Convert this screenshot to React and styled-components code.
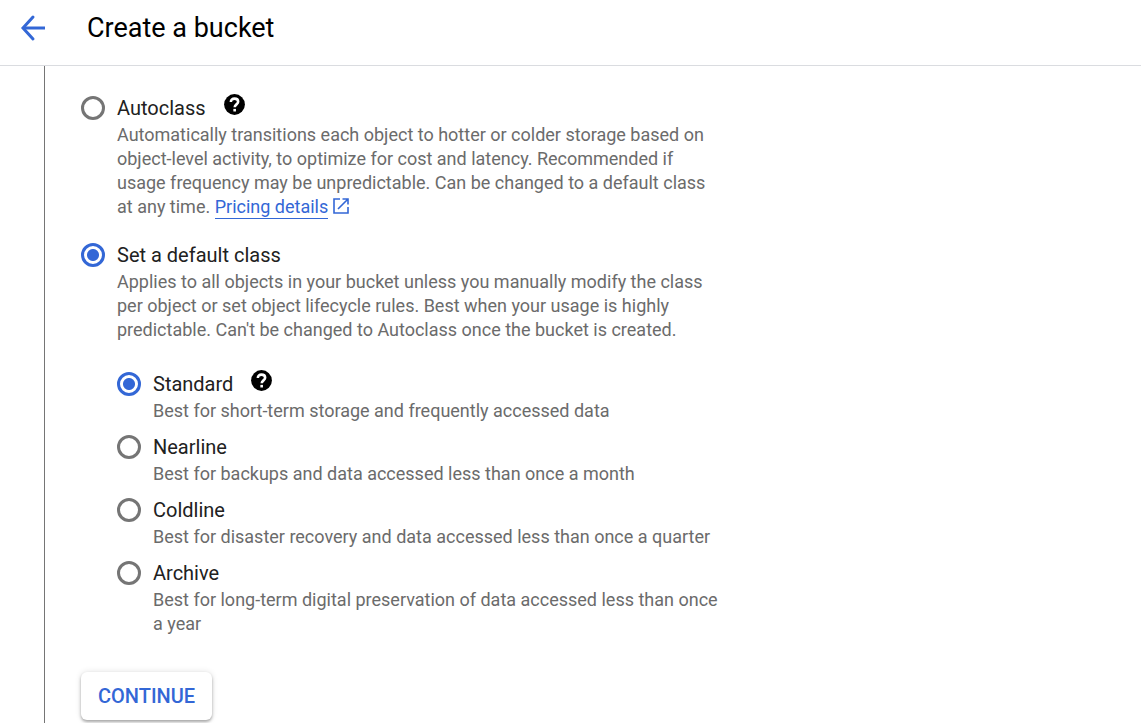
import React, { useState } from "react";
import styled, { createGlobalStyle } from "styled-components";

const GlobalStyle = createGlobalStyle`
  *, *::before, *::after { box-sizing: border-box; }
  body {
    margin: 0;
    background: #fff;
    color: #000;
    font-family: Roboto, "Liberation Sans", sans-serif;
  }
`;

const Page = styled.div`
  min-height: 100vh;
  display: flex;
  flex-direction: column;
`;

const Header = styled.header`
  display: flex;
  align-items: center;
  gap: 36px;
  height: 66px;
  padding: 0 15px 10px;
  border-bottom: 1px solid #dadce0;
`;

const BackButton = styled.button`
  display: flex;
  padding: 0;
  border: 0;
  background: none;
  color: #3367d6;
  cursor: pointer;
`;

const Title = styled.h1`
  margin: 0;
  font-size: 27px;
  font-weight: 400;
  line-height: 36px;
`;

const Step = styled.main`
  flex: 1;
  margin-left: 44px;
  padding: 30px 36px 3px;
  border-left: 1px solid #757575;
`;

const Form = styled.form`
  display: flex;
  flex-direction: column;
  align-items: flex-start;
  gap: 36px;
  max-width: 640px;
`;

const OptionList = styled.div`
  display: flex;
  flex-direction: column;
  gap: ${(p) => (p.$nested ? "12px" : "24px")};
  margin-top: ${(p) => (p.$nested ? "30px" : "0")};
`;

const OptionRow = styled.div`
  display: grid;
  grid-template-columns: 24px 1fr;
  column-gap: 12px;
`;

const Radio = styled.input`
  appearance: none;
  width: 24px;
  height: 24px;
  margin: 0;
  border: 3px solid #757575;
  border-radius: 50%;
  cursor: pointer;

  &:checked {
    border-color: #3367d6;
    background: radial-gradient(circle, #3367d6 0 5.5px, transparent 6.5px);
  }
`;

const LabelLine = styled.div`
  display: flex;
  align-items: flex-start;
  gap: 16px;
  height: 24px;
`;

const Label = styled.label`
  font-size: 20px;
  line-height: 24px;
  color: #212121;
`;

const HelpButton = styled.button`
  display: flex;
  margin-top: -4px;
  padding: 0;
  border: 0;
  background: none;
  color: #000;
  cursor: pointer;
`;

const Description = styled.p`
  margin: 3px 0 0;
  font-size: 18px;
  line-height: 24px;
  color: #6b6b6b;
`;

const Link = styled.a`
  padding-bottom: 1px;
  border-bottom: 1px solid #3367d6;
  color: #3367d6;
  text-decoration: none;
`;

const ExternalMark = styled.svg`
  margin-left: 5px;
  color: #3367d6;
  vertical-align: -1px;
`;

const ContinueButton = styled.button`
  height: 48px;
  padding: 0 17px;
  border: 0;
  border-radius: 6px;
  background: #fff;
  box-shadow: 0 2px 3px rgba(0, 0, 0, 0.3), 0 0 6px rgba(0, 0, 0, 0.12);
  color: #3367d6;
  font: 500 20px/24px Roboto, "Liberation Sans", sans-serif;
  text-transform: uppercase;
  cursor: pointer;
`;

const BackIcon = () => (
  <svg width="36" height="36" viewBox="0 0 36 36" fill="none" stroke="currentColor" strokeWidth="3" aria-hidden="true">
    <path d="M30 18H8" />
    <path d="M18 7L8 18l10 11" strokeLinecap="round" />
  </svg>
);

const HelpIcon = () => (
  <svg width="25" height="25" viewBox="0 0 24 24" aria-hidden="true">
    <circle cx="12" cy="12" r="10" fill="currentColor" />
    <path d="M8.500 9.500C8.500 7.400 10 6.400 12 6.400S15.500 7.500 15.500 9.400C15.500 11.800 12.200 12 12.200 14.600" fill="none" stroke="#fff" strokeWidth="2.500" />
    <path d="M10.900 16.200h2.500v2.500h-2.500z" fill="#fff" />
  </svg>
);

const ExternalIcon = () => (
  <ExternalMark width="16" height="16" viewBox="0 0 16 16" fill="none" stroke="currentColor" strokeWidth="1.600" aria-hidden="true">
    <path d="M7 1H1v14h14V9M9.500 1H15v5.500M15 1L5 11" />
  </ExternalMark>
);

function Option({ id, group, label, help, value, onChange, description, children }) {
  return (
    <OptionRow>
      <Radio
        type="radio"
        id={id}
        name={group}
        checked={value === id}
        onChange={() => onChange(id)}
        aria-describedby={`${id}-description`}
      />
      <div>
        <LabelLine>
          <Label htmlFor={id}>{label}</Label>
          {help && (
            <HelpButton type="button" aria-label={`Help for ${label}`}>
              <HelpIcon />
            </HelpButton>
          )}
        </LabelLine>
        <Description id={`${id}-description`}>{description}</Description>
        {children}
      </div>
    </OptionRow>
  );
}

const storageClasses = [
  { id: "standard", label: "Standard", help: true, description: "Best for short-term storage and frequently accessed data" },
  { id: "nearline", label: "Nearline", description: "Best for backups and data accessed less than once a month" },
  { id: "coldline", label: "Coldline", description: "Best for disaster recovery and data accessed less than once a quarter" },
  { id: "archive", label: "Archive", description: "Best for long-term digital preservation of data accessed less than once a year" },
];

export default function App() {
  const [mode, setMode] = useState("default-class");
  const [storageClass, setStorageClass] = useState("standard");

  return (
    <Page>
      <GlobalStyle />
      <Header>
        <BackButton type="button" aria-label="Back">
          <BackIcon />
        </BackButton>
        <Title>Create a bucket</Title>
      </Header>
      <Step>
        <Form onSubmit={(event) => event.preventDefault()}>
          <OptionList role="radiogroup" aria-label="Storage class mode">
            <Option
              id="autoclass"
              group="mode"
              label="Autoclass"
              help
              value={mode}
              onChange={setMode}
              description={
                <>
                  Automatically transitions each object to hotter or colder storage based on object-level
                  activity, to optimize for cost and latency. Recommended if usage frequency may be
                  unpredictable. Can be changed to a default class at any time.{" "}
                  <Link href="#pricing">Pricing details</Link>
                  <ExternalIcon />
                </>
              }
            />
            <Option
              id="default-class"
              group="mode"
              label="Set a default class"
              value={mode}
              onChange={setMode}
              description="Applies to all objects in your bucket unless you manually modify the class per object or set object lifecycle rules. Best when your usage is highly predictable. Can't be changed to Autoclass once the bucket is created."
            >
              <OptionList $nested role="radiogroup" aria-label="Default storage class">
                {storageClasses.map((item) => (
                  <Option key={item.id} group="storage-class" value={storageClass} onChange={setStorageClass} {...item} />
                ))}
              </OptionList>
            </Option>
          </OptionList>
          <ContinueButton type="submit">Continue</ContinueButton>
        </Form>
      </Step>
    </Page>
  );
}
